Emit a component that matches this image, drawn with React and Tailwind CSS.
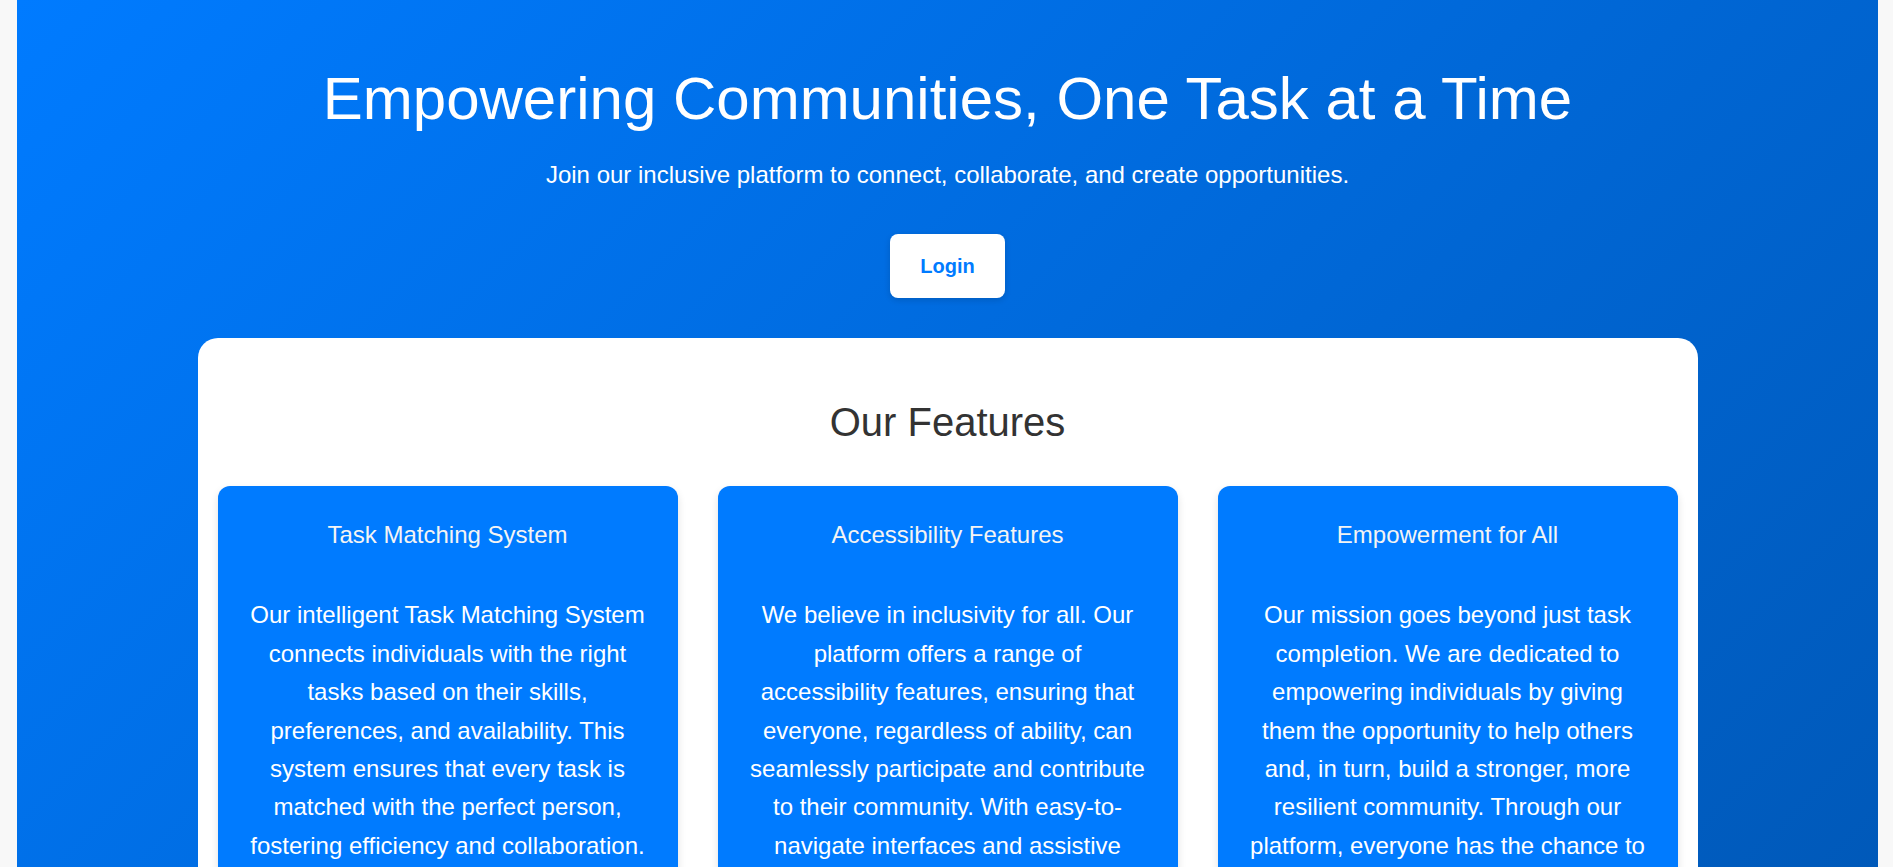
import React from "react";

const features = [
  {
    title: "Task Matching System",
    body: "Our intelligent Task Matching System connects individuals with the right tasks based on their skills, preferences, and availability. This system ensures that every task is matched with the perfect person, fostering efficiency and collaboration.",
  },
  {
    title: "Accessibility Features",
    body: "We believe in inclusivity for all. Our platform offers a range of accessibility features, ensuring that everyone, regardless of ability, can seamlessly participate and contribute to their community. With easy-to-navigate interfaces and assistive technologies, we make sure no one is left behind.",
  },
  {
    title: "Empowerment for All",
    body: "Our mission goes beyond just task completion. We are dedicated to empowering individuals by giving them the opportunity to help others and, in turn, build a stronger, more resilient community. Through our platform, everyone has the chance to make a real difference.",
  },
];

export default function App() {
  return (
    <div
      className="flex min-h-screen bg-[#f8f8f8]"
      style={{ fontFamily: '"Liberation Sans", Arial, sans-serif' }}
    >
      <div className="w-[17px] shrink-0" />
      <main className="flex-1 bg-[linear-gradient(135deg,#007bff,#0056b3)] pt-[65px] pb-[120px] text-center text-white">
        <h1 className="text-[60px] leading-[68px] font-normal">
          Empowering Communities, One Task at a Time
        </h1>
        <p className="mt-[28px] text-[24px] leading-[27px]">
          Join our inclusive platform to connect, collaborate, and create opportunities.
        </p>
        <div className="mt-[46px] flex justify-center">
          <button className="h-[64px] w-[115px] rounded-[8px] bg-white text-[20px] font-bold text-[#007bff] shadow-[0_2px_6px_rgba(0,0,0,0.15)]">
            Login
          </button>
        </div>
        <section className="mx-auto mt-[40px] w-[1500px] rounded-[20px] bg-white p-[20px]">
          <h2 className="mt-[41px] mb-[41px] text-[40px] leading-[46px] font-normal text-[#333333]">
            Our Features
          </h2>
          <div className="grid grid-cols-3 gap-[40px]">
            {features.map((f) => (
              <div
                key={f.title}
                className="rounded-[12px] bg-[#007bff] px-[30px] pt-[30px] pb-[30px] text-white shadow-[0_4px_8px_rgba(0,0,0,0.12)]"
              >
                <h3 className="mb-[42px] text-[24px] leading-[38.4px] font-normal text-[#f4f4f4]">
                  {f.title}
                </h3>
                <p className="text-[24px] leading-[38.4px]">{f.body}</p>
              </div>
            ))}
          </div>
        </section>
      </main>
      <div className="w-[15px] shrink-0" />
    </div>
  );
}
